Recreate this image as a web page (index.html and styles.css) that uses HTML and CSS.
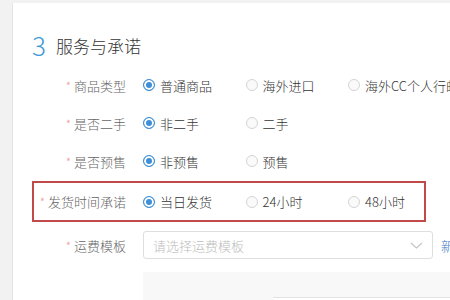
FILE: index.html
```html
<!DOCTYPE html>
<html lang="zh-CN">
<head>
    <meta charset="utf-8">
    <meta name="viewport" content="width=device-width, initial-scale=1.0">
    <title>服务与承诺</title>
    <link rel="stylesheet" href="styles.css">
</head>
<body>
    <div class="card">
        <h2 class="section-title"><span class="step">3</span>服务与承诺</h2>

        <div class="form">
            <div class="row">
                <label class="label"><i>*</i>商品类型</label>
                <div class="options">
                    <span class="option checked"><b class="radio"></b>普通商品</span>
                    <span class="option"><b class="radio"></b>海外进口</span>
                    <span class="option"><b class="radio"></b>海外CC个人行邮</span>
                </div>
            </div>
            <div class="row">
                <label class="label"><i>*</i>是否二手</label>
                <div class="options">
                    <span class="option checked"><b class="radio"></b>非二手</span>
                    <span class="option"><b class="radio"></b>二手</span>
                </div>
            </div>
            <div class="row">
                <label class="label"><i>*</i>是否预售</label>
                <div class="options">
                    <span class="option checked"><b class="radio"></b>非预售</span>
                    <span class="option"><b class="radio"></b>预售</span>
                </div>
            </div>
            <div class="row highlight">
                <label class="label"><i>*</i>发货时间承诺</label>
                <div class="options">
                    <span class="option checked"><b class="radio"></b>当日发货</span>
                    <span class="option"><b class="radio"></b>24小时</span>
                    <span class="option"><b class="radio"></b>48小时</span>
                </div>
            </div>
            <div class="row select-row">
                <label class="label"><i>*</i>运费模板</label>
                <div class="select">
                    <span class="placeholder">请选择运费模板</span>
                    <svg class="chevron" width="13" height="7" viewBox="0 0 13 7">
                        <path d="M1 1 L6.5 6 L12 1" fill="none" stroke="#c4c4c4" stroke-width="1.2"/>
                    </svg>
                </div>
                <a class="link">新建</a>
            </div>
        </div>

        <div class="preview">
            <div class="preview-box"></div>
        </div>
    </div>
</body>
</html>
```

FILE: styles.css
```css
* {
    box-sizing: border-box;
}

html, body {
    height: 100%;
}

body {
    margin: 0;
    background-color: #f2f2f2;
    font-family: "Noto Sans CJK SC", "Noto Sans", sans-serif;
    font-weight: 300;
    color: #333;
    overflow: hidden;
}

.card {
    margin: 3px 0 0 12px;
    height: 297px;
    background: #fff;
    border-left: 1px solid #e4e4e4;
    padding-top: 27px;
    width: 438px;
    overflow: hidden;
}

.section-title {
    margin: 0 0 6px 19px;
    height: 30px;
    display: flex;
    align-items: center;
    font-size: 17px;
    font-weight: 300;
    color: #333;
}

.step {
    font-size: 26px;
    font-weight: 300;
    color: #3f9ad6;
    margin-right: 10px;
    line-height: 30px;
}

.form {
    margin-left: 19px;
    width: 394px;
}

.row {
    display: flex;
    align-items: center;
    height: 38px;
    border: 2px solid transparent;
    font-size: 13px;
}

.highlight {
    height: 41px;
    margin-top: 1px;
    border-color: #c04a4a;
}

.label {
    width: 92px;
    flex-shrink: 0;
    text-align: right;
    color: #666;
    white-space: nowrap;
}

.label i {
    font-style: normal;
    color: #f39b9b;
    margin-right: 3px;
    font-size: 12px;
}

.options {
    display: flex;
    margin-left: 17px;
    flex-shrink: 0;
}

.option {
    display: flex;
    align-items: center;
    width: 102.5px;
    gap: 5px;
    color: #333;
    white-space: nowrap;
}

.radio {
    width: 12px;
    height: 12px;
    border-radius: 50%;
    border: 1px solid #d4d4d4;
    background: #fafafa;
    flex-shrink: 0;
}

.checked .radio {
    border-color: #3d8fd8;
    background: #3d8fd8;
    box-shadow: inset 0 0 0 2px #fff;
}

.select-row {
    height: auto;
    margin-top: 9px;
    border: none;
    padding-left: 2px;
    width: 420px;
}

.select {
    margin-left: 17px;
    width: 290px;
    height: 28px;
    flex-shrink: 0;
    border: 1px solid #dedede;
    border-radius: 3px;
    display: flex;
    align-items: center;
    justify-content: space-between;
    padding: 0 9px 0 9px;
}

.placeholder {
    color: #bdbdbd;
}

.link {
    margin-left: 8px;
    color: #3a78c2;
    white-space: nowrap;
}

.preview {
    margin: 13px 0 0 130px;
    height: 40px;
    background: #f8f8f8;
    padding: 25px 0 0 130px;
}

.preview-box {
    height: 20px;
    border-top: 1px solid #e2e2e2;
    background: #fff;
}
```
